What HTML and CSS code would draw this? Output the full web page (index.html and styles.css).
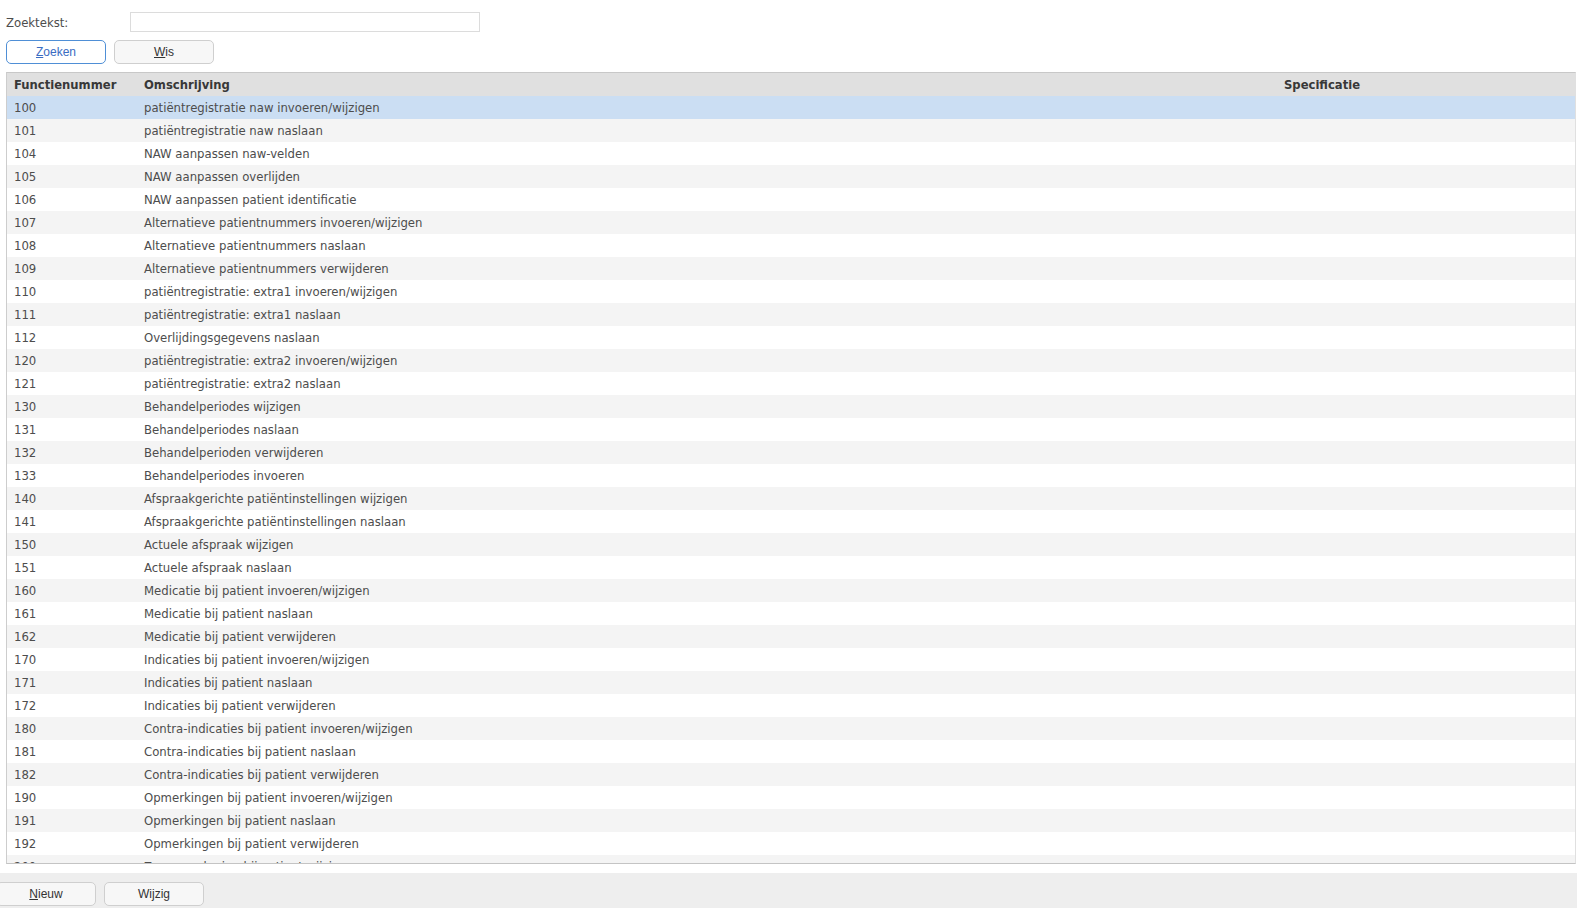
FILE: index.html
```html
<!DOCTYPE html>
<html lang="nl">
<head>
<meta charset="utf-8">
<title>Functies</title>
<link rel="stylesheet" href="styles.css">
</head>
<body>
<div class="search">
  <div class="search-row">
    <label class="label" for="q">Zoektekst:</label>
    <input class="input" id="q" type="text">
  </div>
  <div class="actions">
    <button class="btn btn-primary"><u>Z</u>oeken</button>
    <button class="btn"><u>W</u>is</button>
  </div>
</div>
<div class="grid">
  <table class="table">
    <colgroup><col class="c1"><col class="c2"><col class="c3"></colgroup>
    <thead>
      <tr><th>Functienummer</th><th>Omschrijving</th><th>Specificatie</th></tr>
    </thead>
    <tbody>
      <tr class="sel"><td>100</td><td>patiëntregistratie naw invoeren/wijzigen</td><td></td></tr>
      <tr><td>101</td><td>patiëntregistratie naw naslaan</td><td></td></tr>
      <tr><td>104</td><td>NAW aanpassen naw-velden</td><td></td></tr>
      <tr><td>105</td><td>NAW aanpassen overlijden</td><td></td></tr>
      <tr><td>106</td><td>NAW aanpassen patient identificatie</td><td></td></tr>
      <tr><td>107</td><td>Alternatieve patientnummers invoeren/wijzigen</td><td></td></tr>
      <tr><td>108</td><td>Alternatieve patientnummers naslaan</td><td></td></tr>
      <tr><td>109</td><td>Alternatieve patientnummers verwijderen</td><td></td></tr>
      <tr><td>110</td><td>patiëntregistratie: extra1 invoeren/wijzigen</td><td></td></tr>
      <tr><td>111</td><td>patiëntregistratie: extra1 naslaan</td><td></td></tr>
      <tr><td>112</td><td>Overlijdingsgegevens naslaan</td><td></td></tr>
      <tr><td>120</td><td>patiëntregistratie: extra2 invoeren/wijzigen</td><td></td></tr>
      <tr><td>121</td><td>patiëntregistratie: extra2 naslaan</td><td></td></tr>
      <tr><td>130</td><td>Behandelperiodes wijzigen</td><td></td></tr>
      <tr><td>131</td><td>Behandelperiodes naslaan</td><td></td></tr>
      <tr><td>132</td><td>Behandelperioden verwijderen</td><td></td></tr>
      <tr><td>133</td><td>Behandelperiodes invoeren</td><td></td></tr>
      <tr><td>140</td><td>Afspraakgerichte patiëntinstellingen wijzigen</td><td></td></tr>
      <tr><td>141</td><td>Afspraakgerichte patiëntinstellingen naslaan</td><td></td></tr>
      <tr><td>150</td><td>Actuele afspraak wijzigen</td><td></td></tr>
      <tr><td>151</td><td>Actuele afspraak naslaan</td><td></td></tr>
      <tr><td>160</td><td>Medicatie bij patient invoeren/wijzigen</td><td></td></tr>
      <tr><td>161</td><td>Medicatie bij patient naslaan</td><td></td></tr>
      <tr><td>162</td><td>Medicatie bij patient verwijderen</td><td></td></tr>
      <tr><td>170</td><td>Indicaties bij patient invoeren/wijzigen</td><td></td></tr>
      <tr><td>171</td><td>Indicaties bij patient naslaan</td><td></td></tr>
      <tr><td>172</td><td>Indicaties bij patient verwijderen</td><td></td></tr>
      <tr><td>180</td><td>Contra-indicaties bij patient invoeren/wijzigen</td><td></td></tr>
      <tr><td>181</td><td>Contra-indicaties bij patient naslaan</td><td></td></tr>
      <tr><td>182</td><td>Contra-indicaties bij patient verwijderen</td><td></td></tr>
      <tr><td>190</td><td>Opmerkingen bij patient invoeren/wijzigen</td><td></td></tr>
      <tr><td>191</td><td>Opmerkingen bij patient naslaan</td><td></td></tr>
      <tr><td>192</td><td>Opmerkingen bij patient verwijderen</td><td></td></tr>
      <tr><td>200</td><td>Zorgverzekering bij patient wijzigen</td><td></td></tr>
      <tr><td>201</td><td>Zorgverzekering bij patient naslaan</td><td></td></tr>
    </tbody>
  </table>
</div>
<div class="footer">
  <button class="btn btn-first"><u>N</u>ieuw</button>
  <button class="btn">Wijzig</button>
</div>
</body>
</html>
```
FILE: styles.css
```css
html, body {
  margin: 0;
  padding: 0;
  background: #ffffff;
}
body {
  font-family: "DejaVu Sans", Verdana, sans-serif;
  font-size: 11.7px;
  color: #4d4d4d;
  height: 908px;
  overflow: hidden;
}
.search {
  padding: 12px 0 0 6px;
}
.search-row {
  display: flex;
  align-items: center;
  height: 20px;
}
.label {
  width: 124px;
  padding-top: 2px;
  color: #4d4d4d;
}
.input {
  box-sizing: border-box;
  width: 350px;
  height: 20px;
  margin: 0;
  border: 1px solid #dcdcdc;
  background: #fff;
  padding: 0 4px;
  font: inherit;
  outline: none;
}
.actions {
  display: flex;
  gap: 8px;
  margin-top: 8px;
}
.btn {
  box-sizing: border-box;
  width: 100px;
  height: 24px;
  margin: 0;
  padding: 0;
  border: 1px solid #cfcfcf;
  border-radius: 5px;
  background: #f7f7f7;
  color: #333;
  font-family: "Liberation Sans", Arial, sans-serif;
  font-size: 12px;
  cursor: pointer;
}
.btn-primary {
  border-color: #4f8fd6;
  background: #ffffff;
  color: #3a6cc2;
}
.grid {
  box-sizing: border-box;
  margin: 8px 1px 0 6px;
  height: 792px;
  border-top: 1px solid #c8c8c8;
  border-left: 1px solid #cdcdcd;
  border-right: 1px solid #e0e0e0;
  border-bottom: 1px solid #c4c4c4;
  overflow: hidden;
}
.table {
  width: 100%;
  border-collapse: collapse;
  table-layout: fixed;
}
.c1 { width: 129px; }
.c2 { width: 1140px; }
.table th {
  height: 22px;
  padding: 1px 0 0 8px;
  background: #e0e0e0;
  color: #383838;
  font-size: 11.6px;
  font-weight: bold;
  text-align: left;
  white-space: nowrap;
}
.table th:first-child,
.table td:first-child {
  padding-left: 7px;
}
.table td {
  height: 22px;
  padding: 1px 0 0 8px;
  white-space: nowrap;
  overflow: hidden;
}
.table tbody tr:nth-child(even) td {
  background: #f4f4f4;
}
.table tbody tr.sel td {
  background: #cbdef3;
}
.footer {
  margin-top: 9px;
  height: 35px;
  background: #eeeeee;
  display: flex;
  align-items: flex-start;
  gap: 8px;
  padding-top: 9px;
  box-sizing: border-box;
}
.btn-first {
  margin-left: -4px;
}
```
